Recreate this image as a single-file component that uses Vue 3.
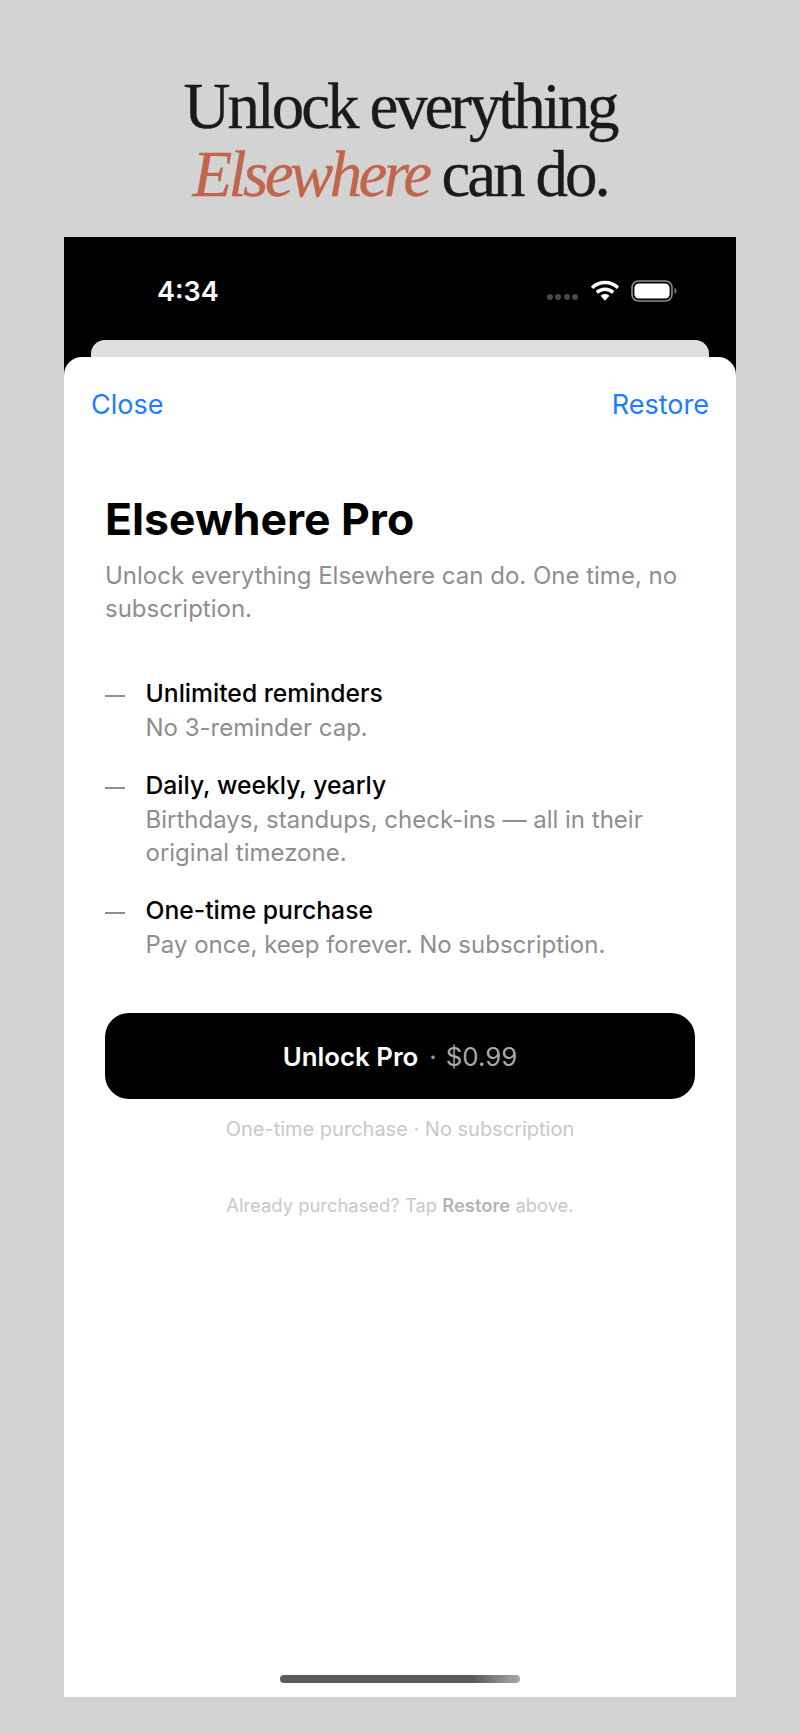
<script setup>
const features = [
  { title: 'Unlimited reminders', body: 'No 3-reminder cap.' },
  { title: 'Daily, weekly, yearly', body: 'Birthdays, standups, check-ins — all in their original timezone.' },
  { title: 'One-time purchase', body: 'Pay once, keep forever. No subscription.' }
]
</script>

<template>
  <main class="page">
    <h1 class="headline">Unlock everything<br /><em>Elsewhere</em> can do.</h1>
    <section class="phone">
      <div class="status">
        <span class="time">4:34</span>
        <div class="status-icons">
          <span class="signal"><i></i><i></i><i></i><i></i></span>
          <svg class="wifi" width="28" height="21" viewBox="0 0 28 21">
            <path d="M1 7.8C8.2 .8 19.8 .8 27 7.8" fill="none" stroke="#fff" stroke-width="3.4" />
            <path d="M5.8 12.6C10.6 8.2 17.4 8.2 22.2 12.6" fill="none" stroke="#fff" stroke-width="3.4" />
            <path d="M9.6 15.8C12.2 13.4 15.8 13.4 18.4 15.8L14 20.8Z" fill="#fff" />
          </svg>
          <svg class="battery" width="46" height="22" viewBox="0 0 46 22">
            <rect x="1" y="1" width="40" height="20" rx="6.5" fill="none" stroke="#8c8c8c" stroke-width="1.6" />
            <rect x="3.4" y="3.4" width="35.2" height="15.2" rx="4.4" fill="#fff" />
            <path d="M43.4 8v6c1.4-.4 2.2-1.6 2.2-3s-.8-2.6-2.2-3Z" fill="#777" />
          </svg>
        </div>
      </div>
      <div class="back-card"></div>
      <div class="sheet">
        <nav class="sheet-nav">
          <span>Close</span>
          <span>Restore</span>
        </nav>
        <div class="content">
          <h2 class="title">Elsewhere Pro</h2>
          <p class="subtitle">Unlock everything Elsewhere can do. One time, no subscription.</p>
          <ul class="features">
            <li v-for="f in features" :key="f.title" class="feature">
              <span class="dash"></span>
              <div>
                <div class="feature-title">{{ f.title }}</div>
                <div class="feature-body">{{ f.body }}</div>
              </div>
            </li>
          </ul>
          <button class="cta">
            <span class="cta-label">Unlock Pro</span>
            <span class="cta-dot">·</span>
            <span class="cta-price">$0.99</span>
          </button>
          <p class="note">One-time purchase · No subscription</p>
          <p class="restore-note">Already purchased? Tap <b>Restore</b> above.</p>
        </div>
        <div class="home-wrap"><div class="home"></div></div>
      </div>
    </section>
  </main>
</template>

<style>
html, body { margin: 0; background: #d3d3d3; }
</style>

<style scoped>
.page {
  width: 800px;
  height: 1734px;
  box-sizing: border-box;
  padding: 72px 64px 37px;
  display: flex;
  flex-direction: column;
  background: #d3d3d3;
  font-family: Inter, "Noto Sans", sans-serif;
}
.headline {
  margin: 0;
  height: 165px;
  font-family: "Liberation Serif", serif;
  font-weight: 400;
  font-size: 65px;
  line-height: 68px;
  letter-spacing: -3.1px;
  text-align: center;
  color: #1a1a1a;
  -webkit-text-stroke: 0.3px currentColor;
}
.headline em { color: #c1654c; letter-spacing: -3.6px; }
.phone {
  flex: 1;
  display: flex;
  flex-direction: column;
  background: #000;
}
.status {
  height: 103px;
  box-sizing: border-box;
  padding: 39px 59px 0 93px;
  display: flex;
  justify-content: space-between;
  align-items: flex-start;
}
.time {
  color: #fff;
  font-size: 27px;
  font-weight: 600;
  line-height: 32px;
}
.status-icons {
  display: flex;
  align-items: flex-start;
  margin-top: 4px;
}
.signal {
  display: flex;
  gap: 2.5px;
  margin: 14px 13px 0 0;
}
.signal i {
  width: 6px;
  height: 6px;
  border-radius: 50%;
  background: #484848;
}
.wifi { margin-right: 12px; }
.back-card {
  height: 17px;
  margin: 0 27px;
  background: #dedede;
  border-radius: 14px 14px 0 0;
}
.sheet {
  flex: 1;
  display: flex;
  flex-direction: column;
  background: #fff;
  border-radius: 18px 18px 0 0;
}
.sheet-nav {
  display: flex;
  justify-content: space-between;
  padding: 32px 27px 0;
  color: #1c7cff;
  font-size: 27px;
  line-height: 32px;
}
.content {
  flex: 1;
  padding: 0 41px;
}
.title {
  margin: 72px 0 0;
  font-size: 44.5px;
  line-height: 52px;
  font-weight: 700;
  color: #000;
}
.subtitle {
  margin: 14px 0 0;
  font-size: 24px;
  line-height: 33px;
  color: #8e8e8e;
}
.features {
  list-style: none;
  margin: 50px 0 0;
  padding: 0;
  display: flex;
  flex-direction: column;
  gap: 23px;
}
.feature {
  display: flex;
  gap: 20.5px;
}
.dash {
  flex: none;
  width: 20px;
  height: 2px;
  margin-top: 20px;
  background: #8e8e8e;
}
.feature-title {
  font-size: 24.7px;
  line-height: 36px;
  font-weight: 500;
  color: #000;
}
.feature-body {
  font-size: 24px;
  line-height: 33px;
  color: #8e8e8e;
}
.cta {
  display: flex;
  justify-content: center;
  align-items: center;
  width: 100%;
  height: 86px;
  margin-top: 52px;
  padding: 0;
  border: 0;
  border-radius: 24px;
  background: #000;
  font-family: inherit;
  font-size: 25.8px;
}
.cta-label { color: #fff; font-weight: 600; }
.cta-dot { color: #9a9a9a; margin: 0 9px 0 11px; }
.cta-price { color: #a9a9a9; }
.note {
  margin: 16px 0 0;
  text-align: center;
  font-size: 20px;
  line-height: 28px;
  color: #c8c8c8;
}
.restore-note {
  margin: 49px 0 0;
  text-align: center;
  font-size: 18.4px;
  line-height: 26px;
  color: #c8c8c8;
}
.restore-note b { color: #b4b4b4; font-weight: 600; }
.home-wrap {
  display: flex;
  justify-content: center;
  padding-bottom: 14px;
}
.home {
  width: 240px;
  height: 8px;
  border-radius: 4px;
  background: linear-gradient(90deg, #5a5a5a 0%, #5a5a5a 80%, #a8a8a8 100%);
}
</style>
